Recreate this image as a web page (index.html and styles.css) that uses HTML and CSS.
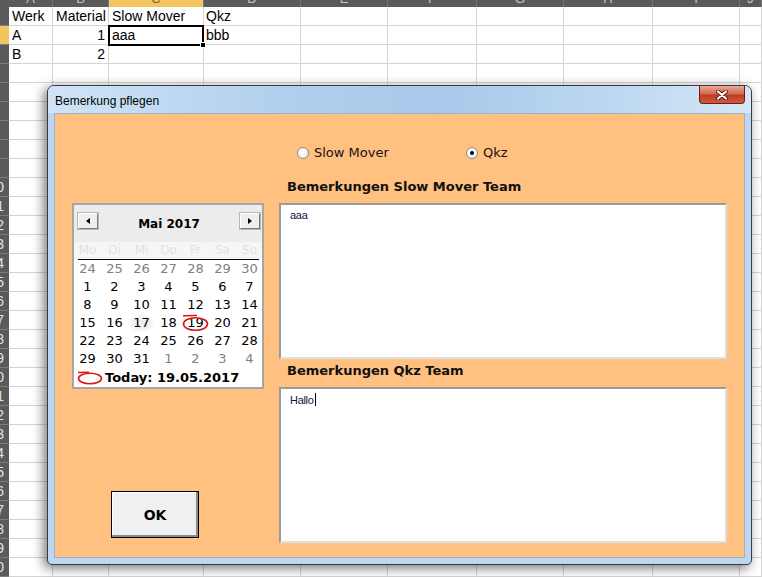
FILE: index.html
```html
<!DOCTYPE html>
<html lang="de">
<head>
    <meta charset="UTF-8">
    <title>Bemerkung pflegen</title>
    <link rel="stylesheet" href="styles.css">
</head>
<body>
    <div class="sheet">
        <div class="rowheads">
            <div class="corner"></div>
            <div class="rh"></div>
            <div class="rh sel"></div>
            <div class="rh"></div>
            <div class="rh"></div>
            <div class="rh"></div>
            <div class="rh"></div>
            <div class="rh"></div>
            <div class="rh"></div>
            <div class="rh"></div>
            <div class="rh">10</div>
            <div class="rh">11</div>
            <div class="rh">12</div>
            <div class="rh">13</div>
            <div class="rh">14</div>
            <div class="rh">15</div>
            <div class="rh">16</div>
            <div class="rh">17</div>
            <div class="rh">18</div>
            <div class="rh">19</div>
            <div class="rh">20</div>
            <div class="rh">21</div>
            <div class="rh">22</div>
            <div class="rh">23</div>
            <div class="rh">24</div>
            <div class="rh">25</div>
            <div class="rh">26</div>
            <div class="rh">27</div>
            <div class="rh">28</div>
            <div class="rh">29</div>
            <div class="rh">30</div>
        </div>
        <div class="col col-a">
            <div class="colhead">A</div>
            <div class="colbody">
                <div class="cell">Werk</div>
                <div class="cell">A</div>
                <div class="cell">B</div>
            </div>
        </div>
        <div class="col col-b">
            <div class="colhead">B</div>
            <div class="colbody">
                <div class="cell">Material</div>
                <div class="cell num">1</div>
                <div class="cell num">2</div>
            </div>
        </div>
        <div class="col col-c">
            <div class="colhead sel">C</div>
            <div class="colbody">
                <div class="cell">Slow Mover</div>
                <div class="cell active">aaa</div>
            </div>
        </div>
        <div class="col col-d">
            <div class="colhead">D</div>
            <div class="colbody">
                <div class="cell">Qkz</div>
                <div class="cell">bbb</div>
            </div>
        </div>
        <div class="col col-e"><div class="colhead">E</div><div class="colbody"></div></div>
        <div class="col col-f"><div class="colhead">F</div><div class="colbody"></div></div>
        <div class="col col-g"><div class="colhead">G</div><div class="colbody"></div></div>
        <div class="col col-h"><div class="colhead">H</div><div class="colbody"></div></div>
        <div class="col col-i"><div class="colhead">I</div><div class="colbody"></div></div>
        <div class="col col-j"><div class="colhead">J</div><div class="colbody"></div></div>
    </div>

    <div class="dialog">
        <div class="titlebar">
            <span class="title">Bemerkung pflegen</span>
            <span class="close">
                <svg width="12" height="10" viewBox="0 0 12 10">
                    <path d="M2 1.5 L10 8.5 M10 1.5 L2 8.5" stroke="#5a1a12" stroke-width="4" stroke-linecap="round"/>
                    <path d="M2 1.5 L10 8.5 M10 1.5 L2 8.5" stroke="#fff" stroke-width="2.2" stroke-linecap="round"/>
                </svg>
            </span>
        </div>
        <div class="panel">
            <div class="left">
                <div class="calendar">
                    <div class="cal-head">
                        <span class="cal-btn"><span class="arrow-left"></span></span>
                        <span class="cal-title">Mai 2017</span>
                        <span class="cal-btn"><span class="arrow-right"></span></span>
                    </div>
                    <div class="cal-names">
                        <span>Mo</span><span>Di</span><span>Mi</span><span>Do</span><span>Fr</span><span>Sa</span><span>So</span>
                    </div>
                    <div class="cal-line"></div>
                    <div class="cal-days">
                        <span class="other">24</span><span class="other">25</span><span class="other">26</span><span class="other">27</span><span class="other">28</span><span class="other">29</span><span class="other">30</span>
                        <span>1</span><span>2</span><span>3</span><span>4</span><span>5</span><span>6</span><span>7</span>
                        <span>8</span><span>9</span><span>10</span><span>11</span><span>12</span><span>13</span><span>14</span>
                        <span>15</span><span>16</span><span class="hover">17</span><span>18</span>
                        <span class="marked">19<svg class="mark" width="27" height="18" viewBox="0 0 27 18"><path d="M1 1.8 L15 1.4" stroke="#e01414" stroke-width="1.5" fill="none"/><ellipse cx="13.5" cy="10" rx="12" ry="6.3" stroke="#e01414" stroke-width="1.6" fill="none"/></svg></span>
                        <span>20</span><span>21</span>
                        <span>22</span><span>23</span><span>24</span><span>25</span><span>26</span><span>27</span><span>28</span>
                        <span>29</span><span>30</span><span>31</span><span class="other">1</span><span class="other">2</span><span class="other">3</span><span class="other">4</span>
                    </div>
                    <div class="cal-today">
                        <svg width="26" height="14" viewBox="0 0 26 14"><path d="M1 1.5 L12 1.2" stroke="#e01414" stroke-width="1.5" fill="none"/><ellipse cx="13" cy="7.5" rx="11.5" ry="5.2" stroke="#e01414" stroke-width="1.6" fill="none"/></svg>
                        <span>Today: 19.05.2017</span>
                    </div>
                </div>
                <button class="ok">OK</button>
            </div>
            <div class="right">
                <div class="radios">
                    <label class="radio first"><span class="dot"></span>Slow Mover</label>
                    <label class="radio checked"><span class="dot"></span>Qkz</label>
                </div>
                <div class="label">Bemerkungen Slow Mover Team</div>
                <div class="memo">aaa</div>
                <div class="label second">Bemerkungen Qkz Team</div>
                <div class="memo">Hallo<span class="caret"></span></div>
            </div>
        </div>
    </div>
</body>
</html>
```

FILE: styles.css
```css
body {
    margin: 0;
    width: 762px;
    height: 577px;
    overflow: hidden;
    font-family: "Liberation Sans", Arial, sans-serif;
    background: #fff;
}

/* Excel im Hintergrund */

.sheet {
    display: flex;
    height: 577px;
    overflow: hidden;
}

.rowheads {
    width: 9px;
    background: #5a5a5a;
    flex-shrink: 0;
}

.corner {
    height: 7px;
}

.rh {
    height: 19px;
    box-sizing: border-box;
    border-bottom: 1px solid #7c7c7c;
    display: flex;
    justify-content: flex-end;
    padding-right: 5px;
    overflow: hidden;
    font-size: 14px;
    line-height: 18px;
    color: #e2e2e2;
}

.rh.sel {
    background: #f2c560;
}

.col {
    flex-shrink: 0;
    box-sizing: border-box;
}

.col-a { width: 44px; }
.col-b { width: 56px; }
.col-c { width: 95px; }
.col-d { width: 97px; }
.col-e { width: 87px; }
.col-f { width: 89px; }
.col-g { width: 87px; }
.col-h { width: 89px; }
.col-i { width: 87px; }
.col-j { flex: 1; }

.colhead {
    height: 7px;
    background: #5a5a5a;
    border-right: 1px solid #777;
    overflow: hidden;
    display: flex;
    justify-content: center;
    align-items: flex-end;
    font-size: 13px;
    line-height: 17px;
    color: #c4c4c4;
}

.colhead.sel {
    background: #f2c560;
    color: #8a6420;
}

.colbody {
    height: 570px;
    border-right: 1px solid #d4d4d4;
    background: repeating-linear-gradient(to bottom, #fff 0, #fff 18px, #d4d4d4 18px, #d4d4d4 19px);
}

.cell {
    height: 19px;
    padding: 0 3px;
    font-size: 14px;
    line-height: 18px;
    color: #000;
    white-space: nowrap;
}

.col-d .cell {
    padding-left: 2px;
}

.cell.num {
    text-align: right;
}

.cell.active {
    position: relative;
    outline: 2px solid #000;
    outline-offset: -1px;
}

.cell.active::after {
    content: "";
    position: absolute;
    right: -3px;
    bottom: -3px;
    width: 4px;
    height: 4px;
    background: #000;
    border: 1px solid #fff;
}

/* Dialog */

.dialog {
    position: absolute;
    left: 47px;
    top: 85px;
    width: 705px;
    height: 480px;
    box-sizing: border-box;
    border: 1px solid #3a3a3a;
    border-radius: 7px 7px 5px 5px;
    background: #bdd7f2;
    box-shadow: -3px 3px 12px rgba(0, 0, 0, 0.55);
    display: flex;
    flex-direction: column;
}

.titlebar {
    height: 27px;
    flex-shrink: 0;
    display: flex;
    justify-content: space-between;
    align-items: flex-start;
    padding: 0 6px 0 7px;
    border-radius: 6px 6px 0 0;
    background: linear-gradient(to right, #d0e4f8 0%, #b4d1ee 30%, #a8c9ea 55%, #bcd7f1 80%, #d6e7f8 100%);
}

.title {
    font-size: 12px;
    line-height: 16px;
    padding-top: 7px;
    color: #000;
}

.close {
    width: 46px;
    height: 18px;
    box-sizing: border-box;
    border: 1px solid #6a1e14;
    border-top: none;
    border-radius: 0 0 4px 4px;
    background: linear-gradient(to bottom, #e8a898 0%, #d36a55 45%, #c23b24 55%, #cf5a3e 100%);
    display: flex;
    align-items: center;
    justify-content: center;
}

.panel {
    margin: 0 6px;
    height: 445px;
    box-sizing: border-box;
    border: 1px solid #98b2d0;
    background: #ffc080;
    display: flex;
    gap: 15px;
    padding: 0 17px;
}

.left {
    width: 192px;
    padding-top: 89px;
    display: flex;
    flex-direction: column;
    align-items: flex-start;
}

/* Kalender */

.calendar {
    width: 192px;
    height: 186px;
    box-sizing: border-box;
    border: 2px solid #a6a6a6;
    background: #fff;
    font-family: "DejaVu Sans", Verdana, sans-serif;
}

.cal-head {
    height: 37px;
    box-sizing: border-box;
    background: #ececec;
    display: flex;
    justify-content: space-between;
    align-items: flex-start;
    padding: 8px 2px 0 4px;
}

.cal-btn {
    width: 20px;
    height: 16px;
    box-sizing: border-box;
    background: #efefef;
    border: 1px solid;
    border-color: #fff #7a7a7a #7a7a7a #fff;
    box-shadow: 0 0 0 1px #b8b8b8;
    display: flex;
    align-items: center;
    justify-content: center;
}

.arrow-left {
    border-right: 4px solid #000;
    border-top: 3px solid transparent;
    border-bottom: 3px solid transparent;
}

.arrow-right {
    border-left: 4px solid #000;
    border-top: 3px solid transparent;
    border-bottom: 3px solid transparent;
}

.cal-title {
    font-size: 12px;
    font-weight: bold;
    line-height: 16px;
    margin-top: 3px;
    color: #000;
}

.cal-names {
    height: 17px;
    display: grid;
    grid-template-columns: repeat(7, 27px);
    background: #f6f6f6;
    font-size: 12px;
    line-height: 17px;
    text-align: center;
    color: #e2e2e2;
}

.cal-line {
    height: 1px;
    margin: 0 3px 0 4px;
    background: #000;
}

.cal-days {
    display: grid;
    grid-template-columns: repeat(7, 27px);
    grid-auto-rows: 18px;
    font-size: 13px;
    line-height: 18px;
    text-align: center;
    color: #000;
}

.cal-days .other {
    color: #808080;
}

.cal-days .hover {
    background: radial-gradient(ellipse at center, #ececec 0, #f2f2f2 50%, #fff 72%);
}

.cal-days .marked {
    position: relative;
}

.mark {
    position: absolute;
    left: 0;
    top: 0;
}

.cal-today {
    height: 19px;
    display: flex;
    align-items: center;
    gap: 2px;
    padding-left: 3px;
    font-size: 13px;
    font-weight: bold;
    color: #000;
}

.ok {
    margin: 102px 0 0 39px;
    width: 88px;
    height: 47px;
    box-sizing: border-box;
    border: 1px solid #000;
    background: #f0f0f0;
    box-shadow: inset -2px -2px 0 #8a8a8a, inset 1px 1px 0 #fff;
    font-family: "DejaVu Sans", Verdana, sans-serif;
    font-size: 14px;
    font-weight: bold;
    color: #000;
    padding: 0;
}

/* rechte Seite */

.right {
    width: 448px;
    display: flex;
    flex-direction: column;
    font-family: "DejaVu Sans", Verdana, sans-serif;
}

.radios {
    display: flex;
    padding: 31px 0 0 18px;
    height: 15px;
}

.radio {
    display: flex;
    align-items: center;
    gap: 5px;
    font-size: 13px;
    line-height: 15px;
    color: #1a1010;
}

.radio.first {
    width: 169px;
}

.dot {
    width: 12px;
    height: 12px;
    box-sizing: border-box;
    border: 1px solid #8c8c8c;
    border-radius: 50%;
    background: radial-gradient(circle at 40% 40%, #fff 0, #f4f4f4 55%, #d6d6d6 100%);
    display: flex;
    align-items: center;
    justify-content: center;
}

.radio.checked .dot::after {
    content: "";
    width: 4px;
    height: 4px;
    border-radius: 50%;
    background: #000;
}

.label {
    margin-top: 19px;
    padding-left: 8px;
    font-size: 13px;
    font-weight: bold;
    line-height: 16px;
    color: #111;
}

.label.second {
    margin-top: 4px;
}

.memo {
    margin-top: 8px;
    height: 156px;
    box-sizing: border-box;
    border: 2px solid;
    border-color: #9a9a9a #dedede #dedede #9a9a9a;
    background: #fff;
    padding: 4px 9px;
    font-family: "Liberation Sans", Arial, sans-serif;
    font-size: 11px;
    letter-spacing: -0.3px;
    line-height: 13px;
    color: #14143a;
}

.caret {
    display: inline-block;
    width: 1px;
    height: 13px;
    margin-left: 1px;
    vertical-align: -2px;
    background: #000;
}
```
